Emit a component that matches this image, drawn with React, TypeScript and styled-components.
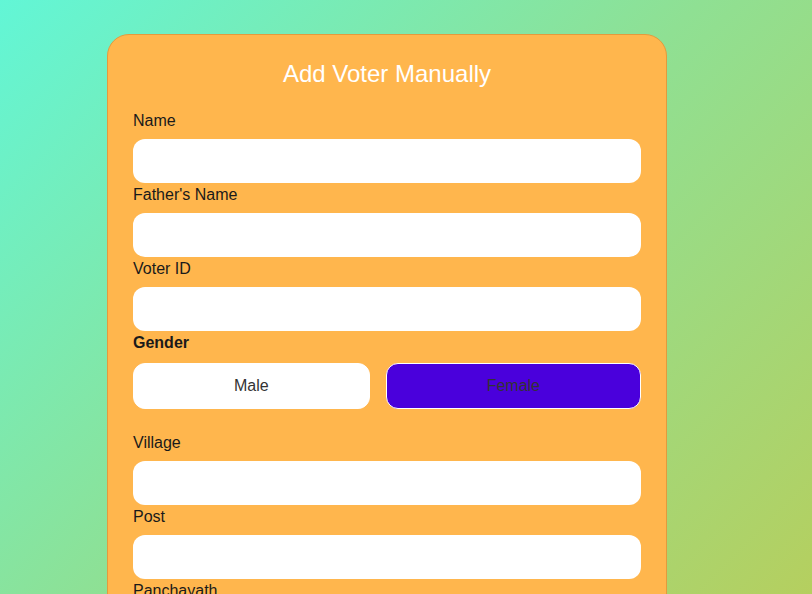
import React, { useState } from "react";
import styled, { createGlobalStyle } from "styled-components";

const GlobalStyle = createGlobalStyle`
  html, body { margin: 0; padding: 0; }
  body {
    font-family: "Liberation Sans", Arial, sans-serif;
    min-height: 594px;
    background: linear-gradient(135deg, #62f6d6 0%, #8fe093 50%, #b5cf5f 100%);
    background-attachment: fixed;
    overflow: hidden;
  }
  * { box-sizing: border-box; }
`;

const Page = styled.div`
  display: flex;
  padding: 34px 0 0 107px;
  min-height: 594px;
`;

const Card = styled.form`
  width: 560px;
  background: #ffb64d;
  border: 1px solid #e39a3d;
  border-radius: 22px;
  padding: 25px 25px 40px;
  display: flex;
  flex-direction: column;
`;

const Title = styled.h2`
  margin: 0 0 21px;
  font-size: 24px;
  line-height: 28px;
  font-weight: 400;
  color: #ffffff;
  text-align: center;
`;

const Label = styled.label<{ $bold?: boolean }>`
  display: block;
  font-size: 16px;
  line-height: 20px;
  padding-top: 2px;
  color: #1a1a1a;
  font-weight: ${(p) => (p.$bold ? 700 : 400)};
  margin-bottom: 8px;
`;

const Input = styled.input`
  display: block;
  width: 100%;
  height: 44px;
  border: none;
  border-radius: 12px;
  background: #ffffff;
  padding: 0 12px;
  font-family: inherit;
  font-size: 16px;
  outline: none;
`;

const GenderRow = styled.div`
  display: flex;
  gap: 16px;
  margin-bottom: 22px;
  margin-top: 2px;
`;

const GenderButton = styled.button<{ $active: boolean }>`
  flex: 1 1 auto;
  height: 46px;
  border-radius: 12px;
  border: 1px solid #ffffff;
  background: ${(p) => (p.$active ? "#4a00dc" : "#ffffff")};
  color: #333333;
  font-family: "Liberation Sans", Arial, sans-serif;
  font-size: 16px;
  padding: 0 12px;
  cursor: pointer;
`;

const fields1 = ["Name", "Father's Name", "Voter ID"];
const fields2 = ["Village", "Post", "Panchayath", "District"];

export default function App() {
  const [gender, setGender] = useState("Female");
  return (
    <>
      <GlobalStyle />
      <Page>
        <Card onSubmit={(e) => e.preventDefault()}>
          <Title>Add Voter Manually</Title>
          {fields1.map((f) => (
            <div key={f}>
              <Label>{f}</Label>
              <Input type="text" />
            </div>
          ))}
          <Label $bold>Gender</Label>
          <GenderRow>
            {["Male", "Female"].map((g) => (
              <GenderButton
                key={g}
                type="button"
                $active={gender === g}
                onClick={() => setGender(g)}
              >
                {g}
              </GenderButton>
            ))}
          </GenderRow>
          {fields2.map((f) => (
            <div key={f}>
              <Label>{f}</Label>
              <Input type="text" />
            </div>
          ))}
        </Card>
      </Page>
    </>
  );
}
